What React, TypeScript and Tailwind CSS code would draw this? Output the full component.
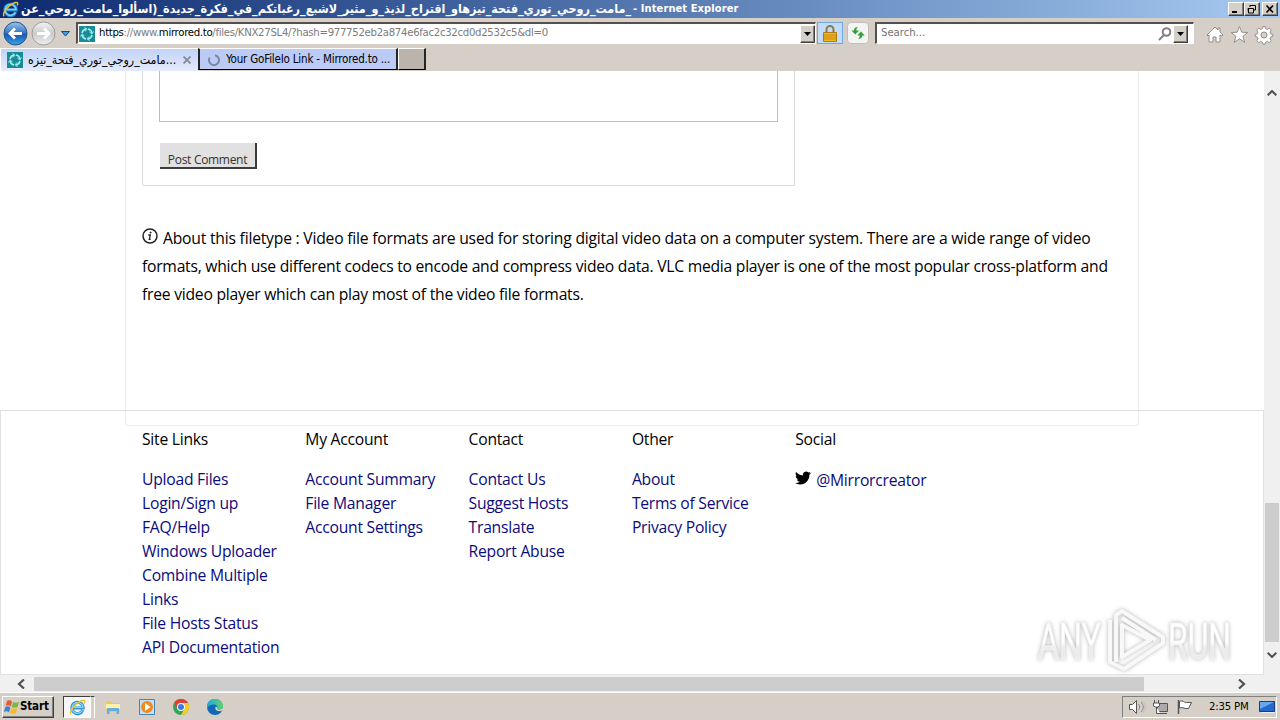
import type { ReactNode } from "react";

const columns = [
  { title: "Site Links", links: ["Upload Files", "Login/Sign up", "FAQ/Help", "Windows Uploader", "Combine Multiple Links", "File Hosts Status", "API Documentation"] },
  { title: "My Account", links: ["Account Summary", "File Manager", "Account Settings"] },
  { title: "Contact", links: ["Contact Us", "Suggest Hosts", "Translate", "Report Abuse"] },
  { title: "Other", links: ["About", "Terms of Service", "Privacy Policy"] },
];

function IeIcon({ className }: { className: string }) {
  return (
    <svg viewBox="0 0 18 18" className={className} fill="none">
      <path d="M14.6 11.8A6 6 0 1 1 15 8.6v1H4" stroke="#258bd0" strokeWidth="3.2" />
      <path d="M14.2 12A5.8 5.8 0 1 1 14.8 9H5" stroke="#7fd3f7" strokeWidth="1.5" />
      <path d="M2.2 16.2C-.5 13 8 3 14.5 1.6c2.5-.5 2.5 1.4 1.6 3.2" stroke="#edc22d" strokeWidth="1.5" />
    </svg>
  );
}

function SiteIcon() {
  return (
    <svg viewBox="0 0 16 16" className="h-4 w-4 shrink-0">
      <path fill="#168c97" d="M0 0h16v16H0z" />
      <g fill="none" stroke="#a9edf0" strokeWidth="1.5">
        <path d="M3 7.2A5 5 0 0 1 7 3.1M9 3.1A5 5 0 0 1 13 7M13 9a5 5 0 0 1-4 3.900M7 12.900A5 5 0 0 1 3 9" />
        <path d="M5.500 1.500 8 3.200 6 5.500M14.500 5.500 12.800 8 10.500 6M10.500 14.500 8 12.800l2-2.300M1.500 10.500 3.200 8l2.300 2" strokeWidth="1" />
      </g>
    </svg>
  );
}

function DropButton() {
  return (
    <span className="flex h-[18px] w-[15px] shrink-0 items-center justify-center border border-t-white border-l-white border-r-[#404040] border-b-[#404040] bg-[#d4d0c8] shadow-[inset_-1px_-1px_#808080]">
      <svg viewBox="0 0 7 4" className="h-1 w-[7px]"><path d="M0 0h7L3.5 4z" /></svg>
    </span>
  );
}

function WindowButton({ children }: { children: ReactNode }) {
  return (
    <span className="flex h-[14px] w-4 items-center justify-center border border-t-white border-l-white border-r-[#404040] border-b-[#404040] bg-[#d4d0c8] shadow-[inset_-1px_-1px_#808080]">
      <svg viewBox="0 0 12 10" className="h-[10px] w-3" fill="none" stroke="#000">{children}</svg>
    </span>
  );
}

function TitleBar() {
  return (
    <div className="flex h-[18px] items-center bg-linear-to-r from-[#0e296f] to-[#a6caf0] pr-[2px] pl-[2px] text-white">
      <IeIcon className="h-[17px] w-[17px] shrink-0" />
      <div className="ml-px flex h-[18px] items-center leading-[18px] whitespace-nowrap">
        <span dir="rtl" className="w-[611px] text-[12.450px] font-bold">_مامت_روحي_توري_فتحة_تيزهاو_اقتراح_لذيذ_و_مثير_لاشبع_رغباتكم_في_فكرة_جديدة_(اسألوا_مامت_روحي_عن</span>
        <span className="ml-[2px] text-[11px] font-bold tracking-[0.110px]">- Internet Explorer</span>
      </div>
      <div className="ml-auto flex">
        <WindowButton><path d="M2 8h5" strokeWidth="2" /></WindowButton>
        <WindowButton><path d="M4 1.500h5.500V6H8M4 1v2M2 4.500h5.500V9h-5zM2.500 4v5" /></WindowButton>
        <span className="w-[2px]" />
        <WindowButton><path d="m2.500 1.500 6.500 7m0-7-6.500 7" strokeWidth="1.700" /></WindowButton>
      </div>
    </div>
  );
}

function AddressRow() {
  return (
    <div className="flex h-[30px] items-start pt-[4px]">
      <svg viewBox="0 0 76 26" className="-mt-px h-[26px] w-[76px] shrink-0">
        <defs>
          <linearGradient id="nav" x2="0" y2="1">
            <stop stopColor="#9cc4ed" /><stop offset=".45" stopColor="#3b79c4" /><stop offset=".55" stopColor="#1d5aac" /><stop offset="1" stopColor="#38a4e8" />
          </linearGradient>
          <linearGradient id="off" x2="0" y2="1">
            <stop stopColor="#f5f5f5" /><stop offset=".5" stopColor="#cacaca" /><stop offset="1" stopColor="#f0f0f0" />
          </linearGradient>
        </defs>
        <circle cx="15.500" cy="12.500" r="11.500" fill="url(#nav)" stroke="#23538f" />
        <path d="M22 12.500H10m5-5-5 5 5 5" fill="none" stroke="#fff" strokeWidth="2.800" />
        <circle cx="43.500" cy="12.500" r="11.500" fill="url(#off)" stroke="#9d9d9d" />
        <path d="M37 12.500h12m-5-5 5 5-5 5" fill="none" stroke="#fff" strokeWidth="2.800" />
        <path d="M61.500 10.500h8l-4 4.500z" fill="#3d9be0" stroke="#174a80" />
      </svg>
      <div className="flex h-[22px] w-[740px] items-center border-t-2 border-r border-b border-l-2 border-t-[#55504b] border-r-white border-b-white border-l-[#55504b] bg-white pl-px">
        <SiteIcon />
        <span className="ml-[4px] text-[11.300px] tracking-[-0.310px] whitespace-nowrap text-[#7b7b7b]"><span className="text-black">https</span>://www.<span className="text-black">mirrored.to</span>/files/KNX27SL4/?hash=977752eb2a874e6fac2c32cd0d2532c5&amp;dl=0</span>
        <span className="ml-auto"><DropButton /></span>
      </div>
      <div className="ml-[1px] flex h-[22px] w-[26px] items-center justify-center border border-[#6fa8e6] bg-[#c3dcf8]">
        <svg viewBox="0 0 14 17" className="h-[17px] w-[14px]">
          <path d="M3.500 8V4.500a3.500 3.500 0 0 1 7 0V8" fill="none" stroke="#8c7852" strokeWidth="2" />
          <path d="M.5 7.500h13v9H.5z" fill="#f2b824" stroke="#ad7b12" />
          <path d="M1 10h12M1 12h12M1 14h12" stroke="#c48a12" />
        </svg>
      </div>
      <div className="ml-1 flex h-[22px] w-[22px] items-center justify-center rounded-sm border border-[#c3beb7] bg-[#f4f4f4]">
        <svg viewBox="0 0 14 14" className="h-[14px] w-[14px]" fill="#32a13a">
          <path d="M7 1C4 1 3 2.500 3 4.500H.5L4.300 8.500 8 4.500H5.300C5.300 3 5.700 2 7 1zM7 13c3 0 4.300-1.500 4.300-3.500h2.400L10 5.500 6.300 9.500h2.400c0 1.500-.3 2.600-1.700 3.500z" />
        </svg>
      </div>
      <div className="ml-[6px] flex h-[22px] w-[319px] items-center border-t-2 border-r border-b border-l-2 border-t-[#55504b] border-r-white border-b-white border-l-[#55504b] bg-white pr-[5px] pl-[4px]">
        <span className="text-[11.300px] tracking-[-0.050px] text-[#737373]">Search...</span>
        <svg viewBox="0 0 14 14" className="mr-[1px] ml-auto h-[14px] w-[14px]" fill="none" stroke="#808080" strokeWidth="2"><circle cx="8.500" cy="5" r="3.800" /><path d="m6 8-5 5" /></svg>
        <DropButton />
      </div>
      <svg viewBox="0 0 70 20" className="mt-[3px] ml-[11px] h-5 w-[70px] shrink-0" fill="#fff" stroke="#928f8b" strokeWidth="1">
        <path d="M2 10 10 2l3 3V3h2v4l3 3-1 1-2-1v7h-4v-5H8v5H4v-7l-1 1z" />
        <path d="m34.500 1.500 2.200 5.700 6 .3-4.700 3.800 1.600 6-5.100-3.500-5.200 3.500 1.600-6-4.700-3.800 6-.3z" />
        <g transform="translate(3.500 -.5)">
          <path d="m56.500 2 .5 2 2 .8 1.800-1.200 2 2-1.200 1.800.8 2 2 .5v2l-2 .5-.8 2 1.200 1.800-2 2-1.800-1.200-2 .8-.5 2h-2l-.5-2-2-.8-1.800 1.200-2-2 1.200-1.800-.8-2-2-.5v-2l2-.5.8-2-1.200-1.800 2-2L52 4.800l2-.8.500-2z" />
          <circle cx="55.500" cy="10.500" r="3" fill="#d6cfc7" />
        </g>
      </svg>
    </div>
  );
}

function TabRow() {
  return (
    <div className="flex h-[23px] text-[11.500px] whitespace-nowrap text-black">
      <div className="flex h-[23px] w-[198px] items-center border-t border-l border-white bg-linear-to-b from-[#c2d2f6] to-[#e4ebfc] pr-[7px] pl-[6px]">
        <SiteIcon />
        <span className="ml-[5px] w-[149px] text-[12.300px]">مامت_روجي_توري_فتحة_تيزه...</span>
        <svg viewBox="0 0 8 8" className="ml-auto h-2 w-2 shrink-0" stroke="#858b99" strokeWidth="1.800"><path d="m.5.500 7 7m0-7-7 7" /></svg>
      </div>
      <div className="flex h-[22px] w-[200px] items-center border-t border-r-2 border-b border-l-2 border-t-white border-r-[#252525] border-b-black border-l-[#252525] bg-[#bbcbf6] pt-[2px] pl-2">
        <svg viewBox="0 0 12 12" className="h-3 w-3" fill="none" stroke="#7d88a1" strokeWidth="2"><path d="M7 1.200a5 5 0 1 1-5.300 2.300" /></svg>
        <span className="ml-[6px] tracking-[-0.190px]">Your GoFileIo Link - Mirrored.to ...</span>
      </div>
      <div className="h-[22px] w-7 border-t border-r-2 border-b border-l border-t-white border-r-[#252525] border-b-black border-l-white bg-[#bab4ad]" />
    </div>
  );
}

function FileTypeInfo() {
  return (
    <div className="mt-[38px] h-[84px] text-[15.700px] leading-7 whitespace-nowrap text-black">
      <p className="flex items-center">
        <svg viewBox="0 0 16 16" className="mr-[5px] -mt-[5px] h-4 w-4 shrink-0" fill="none" stroke="#222">
          <circle cx="8" cy="8" r="7" strokeWidth="1.500" />
          <path d="M6.300 7h2l-1 4.300h1.400" strokeWidth="1.300" /><circle cx="8.600" cy="4.500" r=".7" fill="#222" strokeWidth=".5" />
        </svg>
        <span className="tracking-[-0.216px]">About this filetype : Video file formats are used for storing digital video data on a computer system. There are a wide range of video</span>
      </p>
      <p className="tracking-[-0.254px]">formats, which use different codecs to encode and compress video data. VLC media player is one of the most popular cross-platform and</p>
      <p className="tracking-[-0.240px]">free video player which can play most of the video file formats.</p>
    </div>
  );
}

function Footer() {
  return (
    <footer className="-mt-4 grid h-[265px] w-[1264px] grid-cols-[163.300px_163.300px_163.300px_163.300px_163.300px] border border-[#e0e0e0] pt-[16px] pl-[141px] text-[15.700px] leading-6 tracking-[-0.250px] text-black">
      {columns.map((c) => (
        <div key={c.title}>
          <h2>{c.title}</h2>
          <ul className="mt-4 w-[145px] text-[#0b0b7c]">
            {c.links.map((l) => <li key={l}>{l}</li>)}
          </ul>
        </div>
      ))}
      <div>
        <h2>Social</h2>
        <div className="mt-[17px] flex items-center gap-[5px] whitespace-nowrap text-[#0b0b7c]">
          <svg viewBox="0 0 24 24" className="-mt-1 h-4 w-4 shrink-0" fill="#000"><path d="M23.950 4.570a10 10 0 0 1-2.820.77 4.960 4.960 0 0 0 2.160-2.720c-.95.550-2 .95-3.130 1.180a4.920 4.920 0 0 0-8.380 4.480C7.690 8.090 4.070 6.130 1.640 3.160a4.820 4.820 0 0 0-.67 2.480c0 1.710.87 3.210 2.190 4.100a4.900 4.900 0 0 1-2.230-.62v.06a4.920 4.920 0 0 0 3.950 4.830 5 5 0 0 1-2.210.08 4.940 4.940 0 0 0 4.600 3.420A9.870 9.870 0 0 1 0 19.540a14 14 0 0 0 7.550 2.210c9.050 0 14-7.500 14-13.980 0-.21 0-.42-.02-.63a9.940 9.940 0 0 0 2.460-2.550z" /></svg>
          <span>@Mirrorcreator</span>
        </div>
      </div>
    </footer>
  );
}

function Watermark() {
  return (
    <svg viewBox="0 0 204 72" className="absolute top-[604px] left-[1034px] h-[72px] w-[204px] drop-shadow-[0_0_2px_#b4b4b4]" fill="none">
      <defs><linearGradient id="wm" x2="0" y2="1"><stop offset=".5" stopColor="#fff" /><stop offset=".6" stopColor="#ebebeb" /></linearGradient></defs>
      <g fill="url(#wm)" stroke="#f4f4f4" strokeWidth=".8" fontFamily="Roboto, sans-serif" fontSize="50">
        <text x="4" y="55" textLength="63" lengthAdjust="spacingAndGlyphs">ANY</text>
        <text x="134" y="55" textLength="63" lengthAdjust="spacingAndGlyphs">RUN</text>
      </g>
      <g strokeWidth="4" strokeLinejoin="round" stroke="#f8f8f8">
        <path d="M88 21v32l28-17zM76 16v42l8 4M82 58V11l6-4 41 26v6L90 65l-6-3M88 14l34 22" />
      </g>
    </svg>
  );
}

function Page() {
  return (
    <div className="flex h-[604px]">
      <main className="h-[604px] w-[1264px] overflow-hidden bg-white font-['Open_Sans','Noto_Sans',sans-serif]">
        <div className="ml-[125px] h-[355px] w-[1014px] rounded-b-[3px] border border-t-0 border-[#ececec] px-4">
          <div className="h-[115px] w-[653px] rounded-b-[2px] border border-t-0 border-[#dadada] px-4">
            <div className="h-[51px] w-[619px] border border-t-0 border-[#bdbdbd]" />
            <button className="mt-[21px] ml-px flex h-[26px] w-[97px] items-end justify-center border-r-2 border-b-2 border-[#3c3c3c] bg-[#e1e1e1] pt-[9px] text-[12px] leading-[15px] tracking-[-0.300px] whitespace-nowrap text-[#333]">Post Comment</button>
          </div>
          <FileTypeInfo />
        </div>
        <Footer />
      </main>
      <div className="flex w-4 flex-col items-center bg-[#f0f0f0]">
        <svg viewBox="0 0 10 6" className="mt-[19px] h-[6px] w-[10px]" fill="none" stroke="#505050" strokeWidth="2"><path d="m.700 5.300 4.300-4.300 4.300 4.300" /></svg>
        <div className="mt-[407px] h-[139px] w-[14px] bg-[#cdcdcd]" />
        <svg viewBox="0 0 10 6" className="mt-[10px] h-[6px] w-[10px]" fill="none" stroke="#505050" strokeWidth="2"><path d="m.700.700 4.300 4.300 4.300-4.300" /></svg>
      </div>
    </div>
  );
}

function Taskbar() {
  return (
    <div className="flex h-[28px] items-center border-t border-white bg-[#d6cfc7] pt-px pr-[3px] pl-[2px]">
      <div className="flex h-[22px] w-[52px] items-center border border-t-white border-l-white border-r-[#404040] border-b-[#404040] pl-px shadow-[inset_-1px_-1px_#808080]">
        <svg viewBox="0 0 16 16" className="h-4 w-4 shrink-0">
          <path fill="#e65a2b" d="M3 2c2-1 3-1 5 .500L6.700 7.500C5 6 3.500 6 1.600 7z" /><path fill="#76b945" d="M9 3c2 1 4 1 6-.5L13.600 8c-2 1-4 1-5.900 0z" />
          <path fill="#3d83cf" d="M1.400 8c2-1 3.500-.8 5 .500L5 13.500C3.500 12 2 12 0 13z" /><path fill="#f4bc26" d="M7.400 9c2 1 4 1 5.900 0L12 14c-2 1.200-4 1-6 0z" />
        </svg>
        <span className="text-[11.500px] font-bold tracking-[-0.150px] text-black">Start</span>
      </div>
      <div className="ml-[9px] flex h-[22px] w-[28px] items-center justify-center border border-t-[#404040] border-r-white border-b-white border-l-[#404040] bg-[#f7f6f4]">
        <IeIcon className="h-[17px] w-[17px]" />
      </div>
      <div className="h-[22px] w-[4px] border-t border-r border-t-[#404040] border-r-white" />
      <svg viewBox="0 0 16 16" className="ml-[10px] h-4 w-4">
        <path fill="#e9c965" d="M1 2h5l1 2h8v9H1z" /><path fill="#fff0aa" d="M1 5h14v5H1z" /><path fill="#67add6" d="M2 9h12v6h-2.500v-3h-7v3H2z" />
      </svg>
      <svg viewBox="0 0 16 16" className="ml-[18px] h-4 w-4">
        <path d="M.5.500h15v15H.5z" fill="#c5e0f5" stroke="#4685b9" /><circle cx="8" cy="8" r="6" fill="#f18a1c" /><path d="m6 4 5.500 4L6 12z" fill="#fff" />
      </svg>
      <svg viewBox="0 0 16 16" className="ml-[18px] h-4 w-4">
        <circle cx="8" cy="8" r="8" fill="#33a454" /><path d="M1.070 4A8 8 0 0 1 14.930 4H8a4 4 0 0 0-3.460 6z" fill="#df4132" /><path d="M14.930 4A8 8 0 0 1 8 16l3.460-6A4 4 0 0 0 8 4z" fill="#fbcb24" /><circle cx="8" cy="8" r="4" fill="#fff" /><circle cx="8" cy="8" r="3" fill="#3e78df" />
      </svg>
      <svg viewBox="0 0 16 16" className="ml-[18px] h-4 w-4">
        <defs><linearGradient id="edge"><stop stopColor="#20a7dc" /><stop offset="1" stopColor="#60d36a" /></linearGradient></defs>
        <circle cx="8" cy="8" r="8" fill="#1267b9" /><path fill="url(#edge)" d="M0 8a8 8 0 0 1 16-.5c.3 3-3.500 4.500-5.500 3C11 8 10 5.500 7 5.500 4 5.300 1 7 0 9z" /><path fill="#d6cfc7" d="M8.500 8c-1 3 2 5 6 3.800l1.500-.4V9c-1.500 2-6 2.600-5.500.5.500-1-1-2.500-2-1.500z" />
      </svg>
      <div className="ml-auto flex h-[22px] w-[155px] items-center border border-t-[#808080] border-r-white border-b-white border-l-[#808080] pl-[6px]">
        <svg viewBox="0 0 66 16" className="h-4 w-[66px] shrink-0" fill="#fff" stroke="#555">
          <path d="M.5 5.500h3l4-4v13l-4-4h-3z" /><path d="M9.500 5c1.500 2 1.500 4 0 6M12 3c3 3 3 7 0 10" fill="none" stroke="#888" /><path d="M14 2.500c3 4 3 7 0 11" fill="none" stroke="#bbb" />
          <path d="M28.500 4.500h10v8h-10z" fill="#aaa" /><path d="M30 14.500h8M25.500 1v3m4-3v3m-5 0h6v3l-2 1h-2l-2-1zM27.500 8v6.500h4" />
          <path d="M49.500 1v14" strokeWidth="1.500" /><path d="M50.500 2.500c4-2 5 2 7 1h5l-3 6c-4 1-5-2-9-.5z" />
        </svg>
        <span className="ml-[14px] text-[11.300px] tracking-[-0.190px] whitespace-nowrap text-black">2:35 PM</span>
        <svg viewBox="0 0 16 14" className="mr-px ml-auto h-[14px] w-4"><path d="M.5 1.500h15v10H.5z" fill="#2668cc" stroke="#173e82" /><path d="M1 2h14L1 9z" fill="#67a9f0" /><path d="M2 12.500h13" stroke="#e9eef5" /></svg>
      </div>
    </div>
  );
}

export default function App() {
  return (
    <div className="relative h-[720px] w-[1280px] overflow-hidden bg-[#d6cfc7] font-['DejaVu_Sans_Condensed','DejaVu_Sans',sans-serif]">
      <TitleBar />
      <AddressRow />
      <TabRow />
      <Page />
      <div className="flex h-[17px] items-center bg-[#f0f0f0]">
        <svg viewBox="0 0 8 10" className="ml-[17px] h-[10px] w-2" fill="none" stroke="#505050" strokeWidth="2.200"><path d="M7 .500 2 5l5 4.500" /></svg>
        <div className="ml-[9px] h-[14px] w-[1110px] bg-[#cdcdcd]" />
        <svg viewBox="0 0 8 10" className="ml-[94px] h-[10px] w-2" fill="none" stroke="#505050" strokeWidth="2.200"><path d="m1 .500 5 4.500-5 4.500" /></svg>
      </div>
      <Taskbar />
      <Watermark />
    </div>
  );
}
